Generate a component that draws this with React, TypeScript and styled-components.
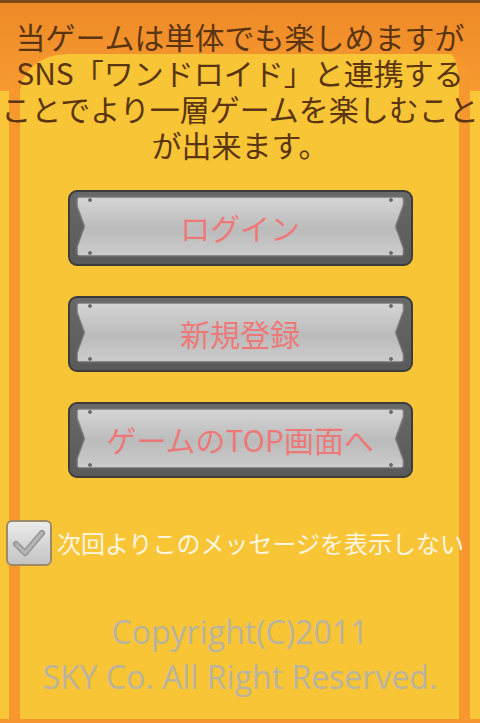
import React from "react";
import styled, { createGlobalStyle } from "styled-components";

const GlobalStyle = createGlobalStyle`
  html, body {
    margin: 0;
    padding: 0;
  }
  body {
    font-family: "Noto Sans CJK JP", "Noto Sans", sans-serif;
  }
`;

const Screen = styled.div`
  position: relative;
  width: 480px;
  height: 723px;
  box-sizing: border-box;
  overflow: hidden;
  border-top: 3px solid #7c4a1b;
  border-bottom: 4px solid #f7962e;
  background: linear-gradient(#ee8a27, #f79a31) 0 0 / 100% 88px no-repeat,
    #f9c637;

  /* the yellow inner panel with its orange side stripes */
  &::before {
    content: "";
    position: absolute;
    top: 51px;
    left: 9px;
    right: 10px;
    bottom: 0;
    border-left: 11px solid #f7982f;
    border-right: 11px solid #f7982f;
    border-top-left-radius: 58px 40px;
    border-top-right-radius: 20px 34px;
    background: #f8c536;
  }
`;

const Content = styled.div`
  position: relative;
  display: flex;
  flex-direction: column;
`;

const Message = styled.p`
  margin: 0;
  padding-top: 15px;
  font-size: 30px;
  line-height: 36px;
  color: #5b3511;
  text-align: center;
  white-space: nowrap;
`;

const ButtonList = styled.div`
  margin-top: 28px;
  display: flex;
  flex-direction: column;
  align-items: center;
  gap: 30px;
`;

const MenuButton = styled.button`
  width: 345px;
  height: 76px;
  box-sizing: border-box;
  padding: 6px 8px 9px;
  background: linear-gradient(#686868, #5a5a5a);
  border: 2px solid #3c3c3c;
  border-radius: 9px;
  cursor: pointer;
  display: flex;
`;

const Rim = styled.div`
  flex: 1;
  display: flex;
  filter: drop-shadow(0 0 1px #e4e4e4);
`;

const Face = styled.span`
  flex: 1;
  display: flex;
  align-items: center;
  justify-content: center;
  clip-path: polygon(
    0 0,
    100% 0,
    100% 12%,
    calc(100% - 8px) 50%,
    100% 88%,
    100% 100%,
    0 100%,
    0 88%,
    8px 50%,
    0 12%
  );
  background: radial-gradient(circle at 12px 2px, #6a6a6a 1.5px, transparent 2.2px),
    radial-gradient(circle at 12px calc(100% - 2px), #6a6a6a 1.5px, transparent 2.2px),
    radial-gradient(circle at calc(100% - 12px) 2px, #6a6a6a 1.5px, transparent 2.2px),
    radial-gradient(circle at calc(100% - 12px) calc(100% - 2px), #6a6a6a 1.5px, transparent 2.2px),
    linear-gradient(#d4d4d4, #bbbbbb 55%, #cbcbcb);
  font-family: "Noto Sans CJK JP", sans-serif;
  font-size: 30px;
  line-height: 1;
  color: #ee7878;
  white-space: nowrap;
`;

const CheckRow = styled.label`
  margin-top: 42px;
  padding-left: 6px;
  display: flex;
  align-items: center;
  gap: 5px;
  height: 46px;
`;

const CheckBox = styled.span`
  width: 46px;
  height: 46px;
  box-sizing: border-box;
  border: 2px solid #9c8a68;
  border-radius: 6px;
  background: linear-gradient(#ececec, #d6d6d6 50%, #c4c4c4);
  display: flex;
  align-items: center;
  justify-content: center;
`;

const CheckLabel = styled.span`
  font-size: 24px;
  line-height: 1;
  color: #fff6e2;
  white-space: nowrap;
`;

const Copyright = styled.p`
  margin: 43px 0 0;
  font-family: "Open Sans", "Noto Sans", sans-serif;
  font-size: 32px;
  line-height: 45px;
  color: #b9b3a0;
  text-align: center;
  white-space: nowrap;
`;

const buttons = ["ログイン", "新規登録", "ゲームのTOP画面へ"];

export default function App() {
  return (
    <>
      <GlobalStyle />
      <Screen>
        <Content>
          <Message>
            当ゲームは単体でも楽しめますが
            <br />
            SNS「ワンドロイド」と連携する
            <br />
            ことでより一層ゲームを楽しむこと
            <br />
            が出来ます。
          </Message>
          <ButtonList>
            {buttons.map((label) => (
              <MenuButton key={label}>
                <Rim>
                  <Face>{label}</Face>
                </Rim>
              </MenuButton>
            ))}
          </ButtonList>
          <CheckRow>
            <CheckBox>
              <svg width="34" height="30" viewBox="0 0 34 30">
                <path
                  d="M4 16 L13 25 L30 5"
                  fill="none"
                  stroke="#8e8e8e"
                  strokeWidth="6"
                  strokeLinecap="round"
                  strokeLinejoin="round"
                />
                <path
                  d="M4 16 L13 25 L30 5"
                  fill="none"
                  stroke="#b4b4b4"
                  strokeWidth="3.5"
                  strokeLinecap="round"
                  strokeLinejoin="round"
                />
              </svg>
            </CheckBox>
            <CheckLabel>次回よりこのメッセージを表示しない</CheckLabel>
          </CheckRow>
          <Copyright>
            Copyright(C)2011
            <br />
            SKY Co. All Right Reserved.
          </Copyright>
        </Content>
      </Screen>
    </>
  );
}
